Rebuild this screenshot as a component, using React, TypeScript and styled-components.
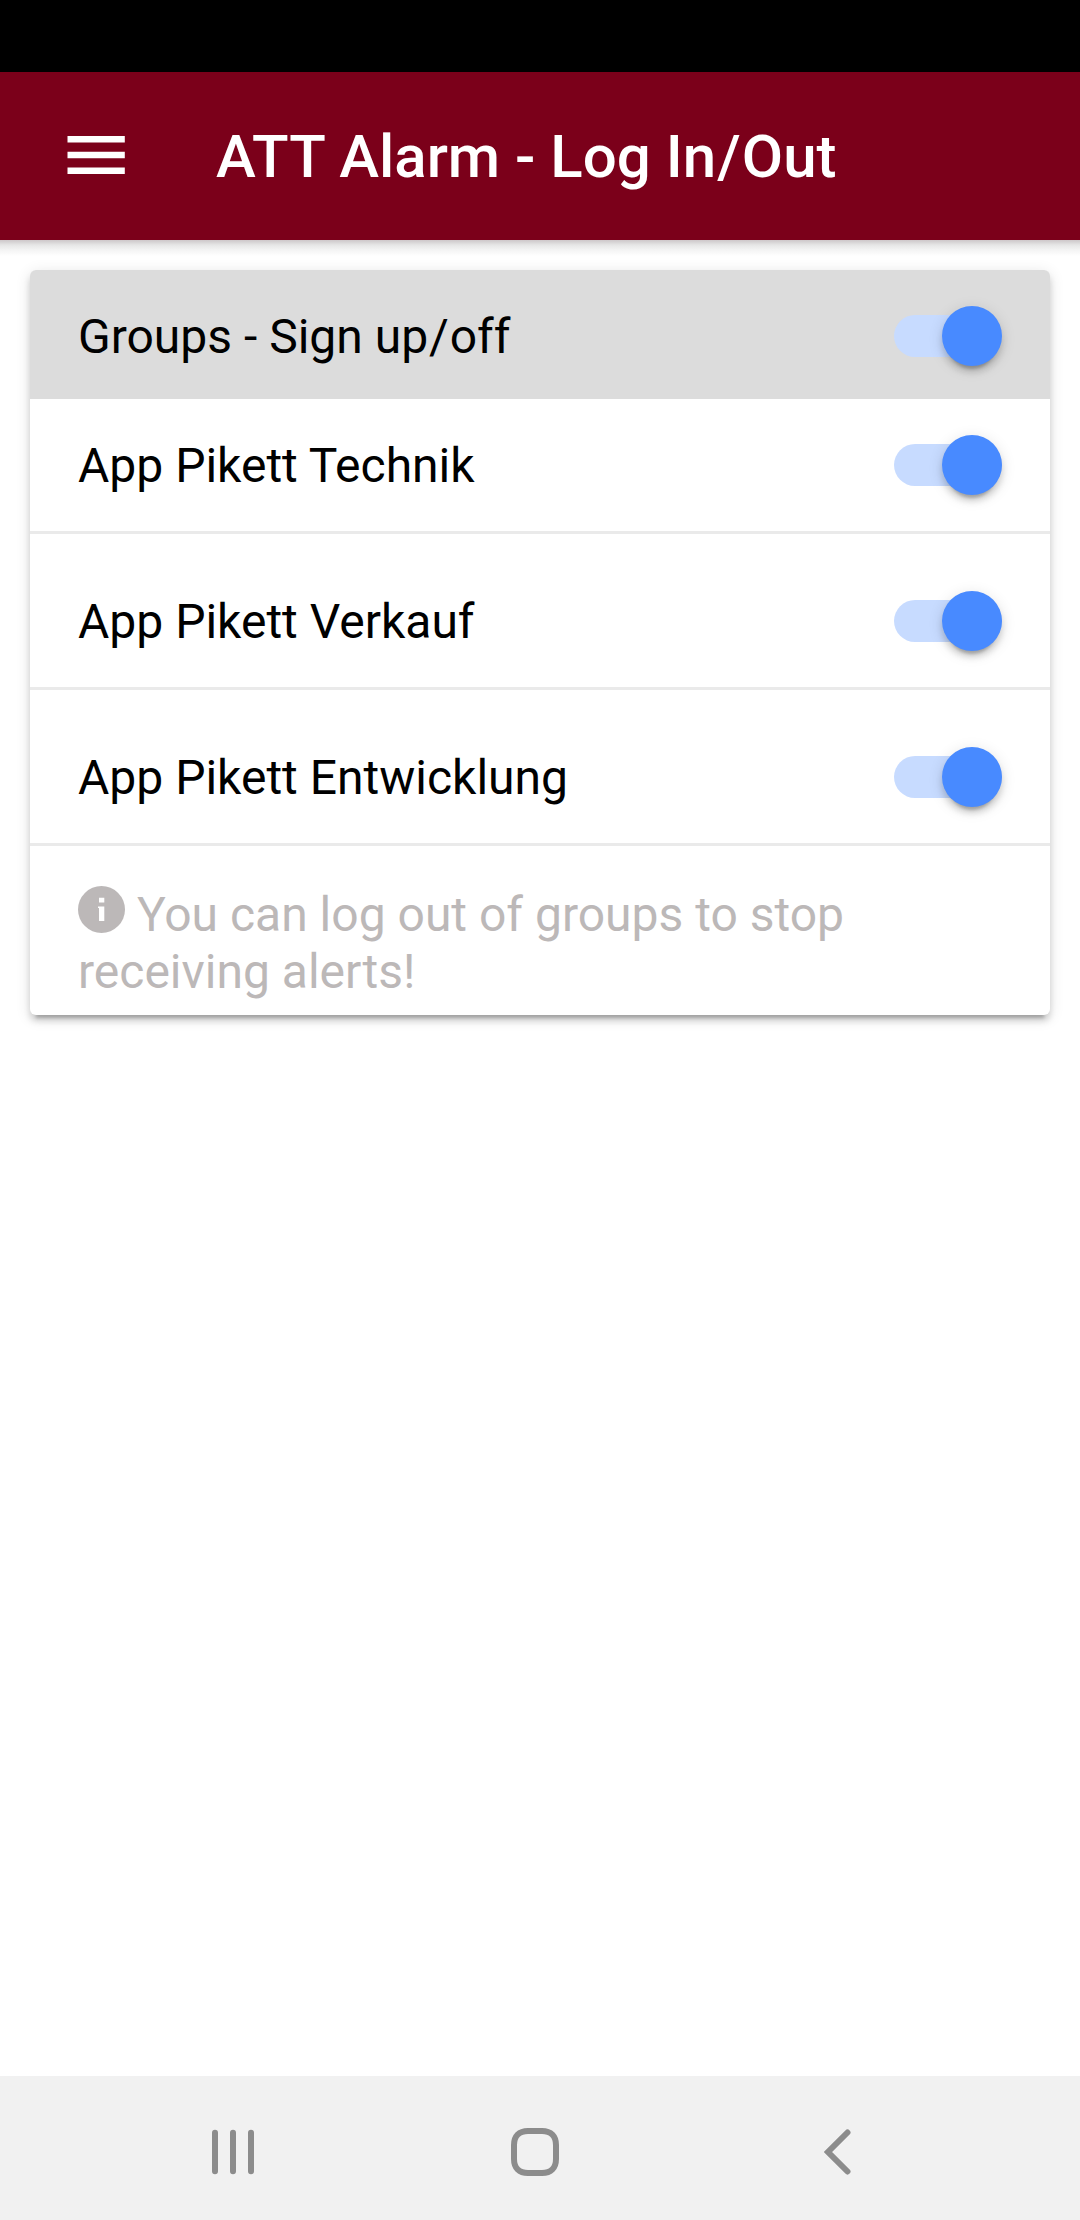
import React from "react";
import styled, { createGlobalStyle } from "styled-components";

const GlobalStyle = createGlobalStyle`
  *, *::before, *::after { box-sizing: border-box; }
  body { margin: 0; background: #fff; font-family: Roboto, "Noto Sans", sans-serif; }
`;

const elevation =
  "0 6px 6px 0 rgba(0,0,0,.14), 0 9px 3px -6px rgba(0,0,0,.2), 0 3px 15px 0 rgba(0,0,0,.12)";

const Screen = styled.div`
  display: flex;
  flex-direction: column;
  width: 1080px;
  height: 2220px;
  background: #fff;
`;

const StatusBar = styled.div`
  height: 72px;
  flex: none;
  background: #000;
`;

const Header = styled.header`
  display: flex;
  align-items: center;
  height: 168px;
  flex: none;
  padding-left: 67px;
  gap: 91px;
  background: #7b001a;
`;

const MenuButton = styled.button`
  display: flex;
  padding: 0;
  border: 0;
  background: none;
`;

const Title = styled.h1`
  margin: 0;
  padding-top: 2px;
  font-size: 60px;
  font-weight: 500;
  line-height: 72px;
  color: #fff;
`;

const Slash = styled.span`
  margin: 0 0.018em 0 0.02em;
`;

const Content = styled.main`
  flex: 1;
  padding: 0 30px;
`;

const HeaderShade = styled.div`
  height: 16px;
  margin: 0 -30px 14px;
  background: linear-gradient(to bottom, #cfc8ca 0, #d6d3d4 2px, #e6e6e6 5px, #f4f4f4 10px, #fff 16px);
`;

const Card = styled.section`
  width: 1020px;
  height: 745px;
  border-radius: 6px;
  background: #fff;
  box-shadow: ${elevation};
`;

const Row = styled.div<{ $kind?: "heading" | "first" }>`
  display: flex;
  align-items: center;
  justify-content: space-between;
  height: ${(p) => (p.$kind === "heading" ? 129 : p.$kind === "first" ? 135 : 156)}px;
  padding: ${(p) => (p.$kind === "heading" ? "3px" : p.$kind === "first" ? "0" : "21px")} 48px 0;
  border-bottom: ${(p) => (p.$kind === "heading" ? "0" : "3px solid #eaeaea")};
  border-radius: ${(p) => (p.$kind === "heading" ? "6px 6px 0 0" : "0")};
  background: ${(p) => (p.$kind === "heading" ? "#dcdcdc" : "transparent")};
`;

const Label = styled.span`
  font-size: 48px;
  line-height: 57px;
  color: #000;
`;

const Track = styled.span`
  display: flex;
  align-items: center;
  justify-content: flex-end;
  width: 108px;
  height: 42px;
  border-radius: 21px;
  background: #c7dbff;
`;

const Knob = styled.span`
  flex: none;
  width: 60px;
  height: 60px;
  border-radius: 50%;
  background: #488aff;
  box-shadow: ${elevation};
`;

const Note = styled.p`
  margin: 0;
  padding: 40px 48px 0;
  font-size: 48px;
  line-height: 57px;
  color: #bcb8b8;
`;

const InfoIcon = styled.svg`
  width: 47px;
  height: 47px;
  vertical-align: -2px;
`;

const NavBar = styled.nav`
  display: flex;
  align-items: center;
  justify-content: space-between;
  height: 144px;
  flex: none;
  padding: 8px 229px 0 212px;
  background: #f1f1f1;
`;

const NavIcon = styled.svg`
  display: block;
  fill: none;
  stroke: #8c8c8c;
  stroke-width: 6;
  stroke-linecap: round;
`;

const HomeIcon = styled(NavIcon)`
  margin-right: 8px;
`;

const groups = ["App Pikett Technik", "App Pikett Verkauf", "App Pikett Entwicklung"];

function Toggle() {
  return (
    <Track role="switch" aria-checked="true">
      <Knob />
    </Track>
  );
}

export default function App() {
  return (
    <>
      <GlobalStyle />
      <Screen>
        <StatusBar />
        <Header>
          <MenuButton aria-label="Menu">
            <svg width="58" height="40" viewBox="0 0 58 40" fill="#fff">
              <path d="M.5 0h57.3v6.500H.5zM.5 15.700h57.3v6.500H.5zM.5 31.500h57.3v6.500H.5z" />
            </svg>
          </MenuButton>
          <Title>
            ATT Alarm - Log In<Slash>/</Slash>Out
          </Title>
        </Header>
        <Content>
          <HeaderShade />
          <Card>
            <Row $kind="heading">
              <Label>
                Groups - Sign up<Slash>/</Slash>off
              </Label>
              <Toggle />
            </Row>
            {groups.map((name, i) => (
              <Row key={name} $kind={i === 0 ? "first" : undefined}>
                <Label>{name}</Label>
                <Toggle />
              </Row>
            ))}
            <Note>
              <InfoIcon viewBox="0 0 47 47">
                <circle cx="23.5" cy="23.5" r="23.5" fill="#bcb8b8" />
                <path d="M21 11.7h5.3v4.800H21zM20 20.500h6.300v14.500H21V22H20z" fill="#fff" />
              </InfoIcon>{" "}
              You can log out of groups to stop receiving alerts!
            </Note>
          </Card>
        </Content>
        <NavBar>
          <NavIcon width="42" height="46" viewBox="0 0 42 46">
            <path d="M3 3.7v38.6M21 3.7v38.6M39 3.7v38.6" />
          </NavIcon>
          <HomeIcon width="48" height="48" viewBox="0 0 48 48">
            <path d="M17 3h14C40 3 45 8 45 17v14c0 9-5 14-14 14H17C8 45 3 40 3 31V17C3 8 8 3 17 3z" />
          </HomeIcon>
          <NavIcon width="27" height="46" viewBox="0 0 27 46">
            <path d="M23.5 3.5L4 23l19.500 19.500" />
          </NavIcon>
        </NavBar>
      </Screen>
    </>
  );
}
